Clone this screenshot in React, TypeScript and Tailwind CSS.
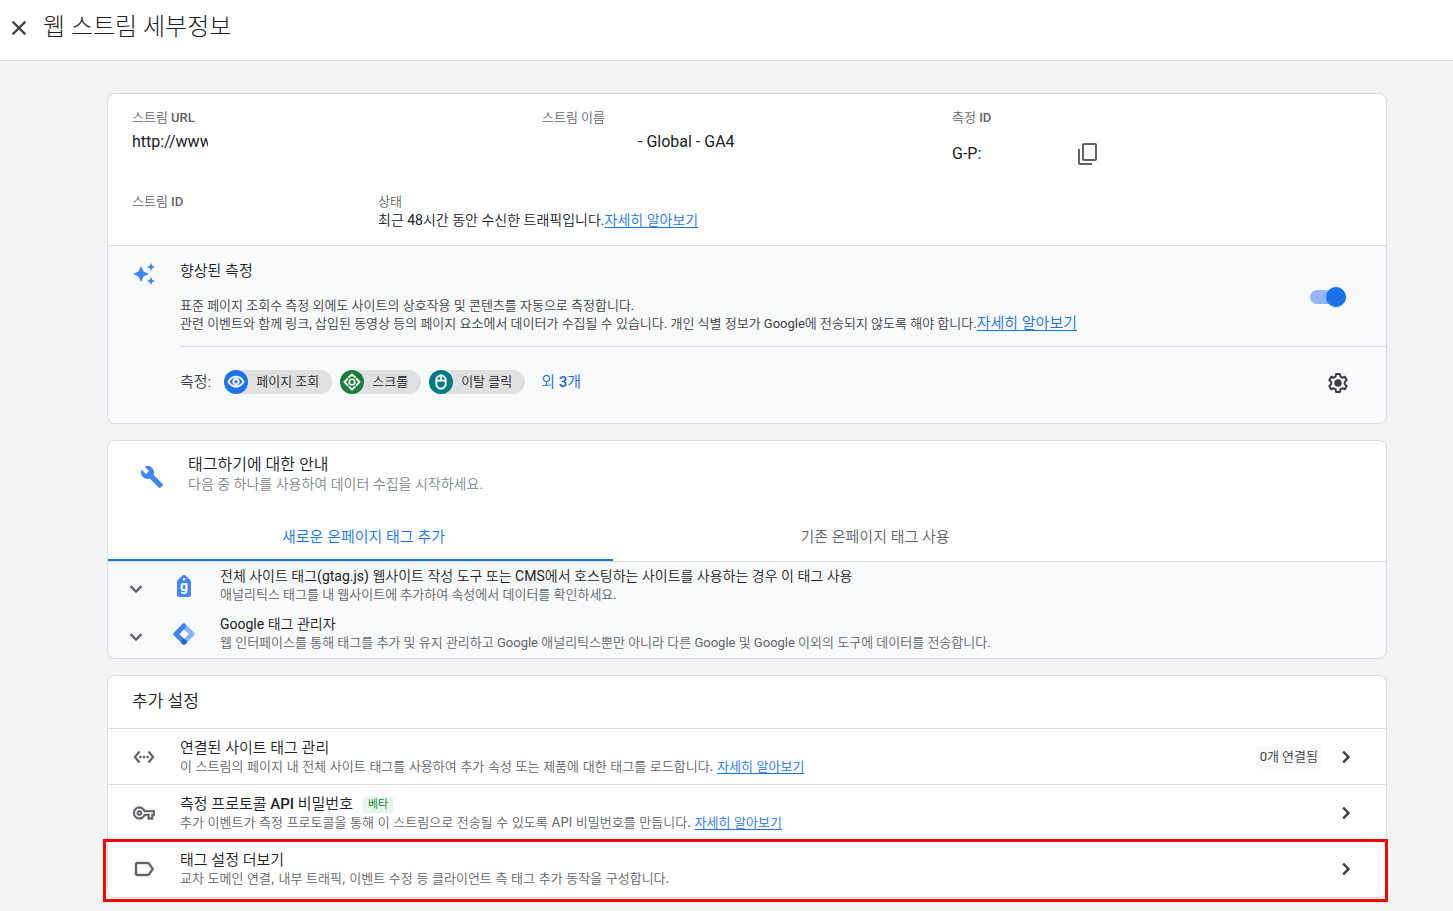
import { useState } from 'react';
import type { ReactNode } from 'react';
import {
  MdAutoAwesome,
  MdBuild,
  MdChevronRight,
  MdClose,
  MdContentCopy,
  MdExpandMore,
  MdLabelOutline,
  MdOutlineMouse,
  MdOutlineVisibility,
  MdOutlineVpnKey,
  MdSettingsEthernet,
} from 'react-icons/md';

function LearnMore({ className = '' }: { className?: string }) {
  return (
    <a href="#learn-more" className={`text-[#1a73e8] underline underline-offset-2 ${className}`}>
      자세히 알아보기
    </a>
  );
}

function Card({ children }: { children: ReactNode }) {
  return <section className="rounded-lg border border-[#dadce0] bg-white">{children}</section>;
}

function FieldLabel({ children }: { children: ReactNode }) {
  return <dt className="text-[13px] leading-4 font-medium text-[#5f6368]">{children}</dt>;
}

function ScrollIcon() {
  return (
    <svg viewBox="0 0 18 18" className="size-[18px]" fill="none" stroke="white">
      <circle cx="9" cy="9" r="2.8" strokeWidth="1.6" />
      <path d="M5.4 4.8 9 1.6l3.6 3.2M5.4 13.2 9 16.4l3.6-3.2M4.8 5.4 1.6 9l3.2 3.6M13.2 5.4 16.4 9l-3.2 3.6" strokeWidth="2" />
    </svg>
  );
}

function GearIcon() {
  return (
    <svg viewBox="-12 -12 24 24" className="size-6" fill="currentColor">
      <path
        d="M-1.9-9H1.9L2.4-6.4 4.3-5.3 6.8-6.2 8.7-2.9 6.7-1.1V1.1L8.7 2.9 6.8 6.2 4.3 5.3 2.4 6.4 1.9 9H-1.9L-2.4 6.4-4.3 5.3-6.8 6.2-8.7 2.9-6.7 1.1V-1.1L-8.7-2.9-6.8-6.2-4.3-5.3-2.4-6.4z"
        fill="none"
        stroke="currentColor"
        strokeWidth="2"
        strokeLinejoin="round"
      />
      <circle r="3.7" />
    </svg>
  );
}

function GtagIcon() {
  return (
    <svg viewBox="0 0 14 22" className="h-[22px] w-3.5">
      <path d="M5.6.6a2 2 0 0 1 2.8 0L13 4.8a3 3 0 0 1 1 2.2v13a2 2 0 0 1-2 2H2a2 2 0 0 1-2-2V7a3 3 0 0 1 1-2.2z" fill="#4285f4" />
      <circle cx="7" cy="4.2" r="1.2" fill="white" />
      <text x="7" y="16" textAnchor="middle" fontSize="14" fontWeight="700" fill="white" fontFamily="Roboto, sans-serif">
        g
      </text>
    </svg>
  );
}

function TagManagerIcon() {
  return (
    <svg viewBox="0 0 22 22" className="size-[22px]">
      <path d="M9.4 1a2.3 2.3 0 0 1 3.2 0L21 9.4a2.3 2.3 0 0 1 0 3.2L12.6 21 9.5 17.7 15.6 11 7.5 3z" fill="#8ab4f8" />
      <path d="M9.4 1a2.3 2.3 0 0 1 3.2 0l.4 3.6L6.6 11l6 6-3.2 4L1 12.6a2.3 2.3 0 0 1 0-3.2z" fill="#4285f4" />
      <path d="M11 6.7 15.3 11 11 15.3 6.7 11z" fill="white" />
      <circle cx="11" cy="19" r="2.7" fill="#1967d2" />
    </svg>
  );
}

function Chip({ icon, color, children }: { icon: ReactNode; color: string; children: ReactNode }) {
  return (
    <li className="flex h-6 items-center rounded-full bg-[#e0e0e0] pr-[13px] text-[13px] text-[#202124]">
      <span className={`mr-2 flex size-6 items-center justify-center rounded-full text-white ${color}`}>{icon}</span>
      {children}
    </li>
  );
}

function TagOption({ icon, title, text }: { icon: ReactNode; title: string; text: string }) {
  return (
    <li className="flex h-12 pl-4">
      <button aria-label={`${title} 펼치기`} className="self-center pt-1.5 text-[#5f6368]">
        <MdExpandMore className="size-6 [&>path:last-child]:stroke-[0.5]" />
      </button>
      <span className="ml-6 flex w-6 items-center justify-center">{icon}</span>
      <div className="ml-6 pt-1">
        <h3 className="text-sm leading-5 text-[#202124]">{title}</h3>
        <p className="text-[13px] leading-[18px] text-[#5f6368]">{text}</p>
      </div>
    </li>
  );
}

interface SettingProps {
  icon: ReactNode;
  title: string;
  text: string;
  link?: boolean;
  badge?: string;
  status?: string;
  highlighted?: boolean;
}

function SettingRow({ icon, title, text, link, badge, status, highlighted }: SettingProps) {
  return (
    <li className="relative flex h-14 items-center border-b border-[#dadce0] pr-7 pl-6 last:border-b-0">
      <span className="flex w-6 justify-center text-[#5f6368]">{icon}</span>
      <div className="ml-6 flex-1 pb-0.5">
        <div className="flex items-center gap-2.5">
          <h3 className="text-[15px] leading-5 font-medium text-[#202124]">{title}</h3>
          {badge && (
            <span className="mt-0.5 rounded-xs bg-[#e6f4ea] px-[5px] text-[11px] leading-4 text-[#188038]">{badge}</span>
          )}
        </div>
        <p className="font-['Inter','Noto_Sans_CJK_KR_DemiLight','Noto_Sans_CJK_KR',sans-serif] text-[13px] leading-4 text-[#5f6368]">
          {text} {link && <LearnMore />}
        </p>
      </div>
      {status && (
        <span className="rounded-xs bg-[#f8f9fa] px-1 text-[13px] leading-6 text-[#3c4043]">{status}</span>
      )}
      <button aria-label={`${title} 열기`} className="ml-3 text-[#3c4043]">
        <MdChevronRight className="size-6 [&>path:last-child]:stroke-[0.5]" />
      </button>
      {highlighted && (
        <span className="pointer-events-none absolute -top-[2px] -right-0.5 -bottom-[5px] -left-[5px] border-3 border-[#ff0000]" />
      )}
    </li>
  );
}

export default function App() {
  const [enhanced, setEnhanced] = useState(true);
  const [tab, setTab] = useState(0);

  return (
    <div className="min-h-screen bg-[#f1f3f4] font-['Roboto','Noto_Sans_CJK_KR_DemiLight','Noto_Sans_CJK_KR',sans-serif] text-[#202124]">
      <header className="flex h-[61px] items-center border-b border-[#dadce0] bg-white pb-1.5 pl-[7px]">
        <button aria-label="닫기" className="pt-0.5 text-[#3c4043]">
          <MdClose className="size-6 [&>path:last-child]:stroke-[0.4]" />
        </button>
        <h1 className="ml-3 font-['Roboto','Noto_Sans_CJK_KR',sans-serif] text-2xl font-light text-[#202124]">웹 스트림 세부정보</h1>
      </header>

      <main className="flex flex-col gap-4 pt-8 pr-[66px] pb-3 pl-[107px]">
        <Card>
          <div className="px-6 pt-4 pb-[15px]">
            <dl className="grid h-[84px] grid-cols-3">
              <div>
                <FieldLabel>스트림 URL</FieldLabel>
                <dd className="mt-1 w-[76px] overflow-hidden leading-6">http://www</dd>
              </div>
              <div>
                <FieldLabel>스트림 이름</FieldLabel>
                <dd className="mt-1 pl-24 leading-6">- Global - GA4</dd>
              </div>
              <div>
                <FieldLabel>측정 ID</FieldLabel>
                <dd className="mt-2 flex h-10 items-center">
                  <span className="w-[124px]">G-P:</span>
                  <button aria-label="측정 ID 복사" className="text-[#5f6368]">
                    <MdContentCopy className="size-6 -scale-y-100" />
                  </button>
                </dd>
              </div>
            </dl>
            <dl className="grid grid-cols-5">
              <div>
                <FieldLabel>스트림 ID</FieldLabel>
              </div>
              <div className="col-span-4">
                <FieldLabel>상태</FieldLabel>
                <dd className="text-sm leading-5">
                  최근 48시간 동안 수신한 트래픽입니다.
                  <LearnMore />
                </dd>
              </div>
            </dl>
          </div>

          <div className="flex rounded-b-lg border-t border-[#dadce0] bg-[#f8f9fa] pl-6">
            <MdAutoAwesome className="mt-4 size-6 text-[#4285f4]" />
            <div className="ml-6 flex-1">
              <div className="flex h-[101px] items-center border-b border-[#dadce0] pt-0.5 pr-10">
                <div className="flex-1">
                  <h2 className="text-[15px] leading-5">향상된 측정</h2>
                  <p className="mt-4 text-[13px] leading-[18px] text-[#3c4043]">
                    표준 페이지 조회수 측정 외에도 사이트의 상호작용 및 콘텐츠를 자동으로 측정합니다.
                    <br />
                    관련 이벤트와 함께 링크, 삽입된 동영상 등의 페이지 요소에서 데이터가 수집될 수 있습니다. 개인 식별 정보가
                    Google에 전송되지 않도록 해야 합니다.
                    <LearnMore className="text-[15px] leading-4" />
                  </p>
                </div>
                <input
                  type="checkbox"
                  role="switch"
                  aria-label="향상된 측정"
                  checked={enhanced}
                  onChange={(e) => setEnhanced(e.target.checked)}
                  className="flex h-3.5 w-9 appearance-none items-center rounded-full bg-[#bdc1c6] before:size-5 before:shrink-0 before:rounded-full before:bg-white before:shadow-sm checked:justify-end checked:bg-[#94b8f7] checked:before:bg-[#1a73e8]"
                />
              </div>
              <div className="flex h-[76px] items-center pr-9 pb-1.5">
                <span className="text-[15px] text-[#3c4043]">측정:</span>
                <ul className="ml-[13px] flex gap-2">
                  <Chip icon={<MdOutlineVisibility className="size-[18px] [&>path:last-child]:stroke-[0.8]" />} color="bg-[#1a73e8]">
                    페이지 조회
                  </Chip>
                  <Chip icon={<ScrollIcon />} color="bg-[#188038]">
                    스크롤
                  </Chip>
                  <Chip icon={<MdOutlineMouse className="size-4 [&>path:last-child]:stroke-[0.8]" />} color="bg-[#007b83]">
                    이탈 클릭
                  </Chip>
                </ul>
                <a href="#more" className="ml-4 text-[15px] font-medium text-[#1967d2]">
                  외 3개
                </a>
                <button aria-label="측정 설정" className="ml-auto pt-0.5 text-[#3c4043]">
                  <GearIcon />
                </button>
              </div>
            </div>
          </div>
        </Card>

        <Card>
          <div className="flex pt-3.5 pl-8">
            <MdBuild className="mt-2.5 size-6 text-[#4285f4]" />
            <div className="ml-6">
              <h2 className="text-base leading-5">태그하기에 대한 안내</h2>
              <p className="text-sm leading-[18px] text-[#80868b]">다음 중 하나를 사용하여 데이터 수집을 시작하세요.</p>
            </div>
          </div>
          <div role="tablist" className="mt-[21px] grid h-12 grid-cols-[505fr_518fr_255fr] border-b border-[#dadce0] text-[15px]">
            {['새로운 온페이지 태그 추가', '기존 온페이지 태그 사용'].map((name, i) => (
              <button
                key={name}
                role="tab"
                aria-selected={tab === i}
                onClick={() => setTab(i)}
                className={`border-b-2 pt-0.5 pl-1.5 ${tab === i ? 'border-[#1a73e8] text-[#1a73e8]' : 'border-transparent text-[#5f6368]'}`}
              >
                {name}
              </button>
            ))}
          </div>
          <ul className="rounded-b-lg bg-[#f8f9fa]">
            <TagOption
              icon={<GtagIcon />}
              title="전체 사이트 태그(gtag.js) 웹사이트 작성 도구 또는 CMS에서 호스팅하는 사이트를 사용하는 경우 이 태그 사용"
              text="애널리틱스 태그를 내 웹사이트에 추가하여 속성에서 데이터를 확인하세요."
            />
            <TagOption
              icon={<TagManagerIcon />}
              title="Google 태그 관리자"
              text="웹 인터페이스를 통해 태그를 추가 및 유지 관리하고 Google 애널리틱스뿐만 아니라 다른 Google 및 Google 이외의 도구에 데이터를 전송합니다."
            />
          </ul>
        </Card>

        <Card>
          <h2 className="border-b border-[#dadce0] px-6 pb-0.5 text-[17px] leading-[50px]">추가 설정</h2>
          <ul>
            <SettingRow
              icon={<MdSettingsEthernet className="size-[22px] [&>path:last-child]:stroke-[0.6]" />}
              title="연결된 사이트 태그 관리"
              text="이 스트림의 페이지 내 전체 사이트 태그를 사용하여 추가 속성 또는 제품에 대한 태그를 로드합니다."
              link
              status="0개 연결됨"
            />
            <SettingRow
              icon={<MdOutlineVpnKey className="size-[22px] [&>path:last-child]:stroke-[0.4]" />}
              title="측정 프로토콜 API 비밀번호"
              badge="베타"
              text="추가 이벤트가 측정 프로토콜을 통해 이 스트림으로 전송될 수 있도록 API 비밀번호를 만듭니다."
              link
            />
            <SettingRow
              icon={<MdLabelOutline className="size-6 [&>path:last-child]:stroke-[0.4]" />}
              title="태그 설정 더보기"
              text="교차 도메인 연결, 내부 트래픽, 이벤트 수정 등 클라이언트 측 태그 추가 동작을 구성합니다."
              highlighted
            />
          </ul>
        </Card>
      </main>
    </div>
  );
}
